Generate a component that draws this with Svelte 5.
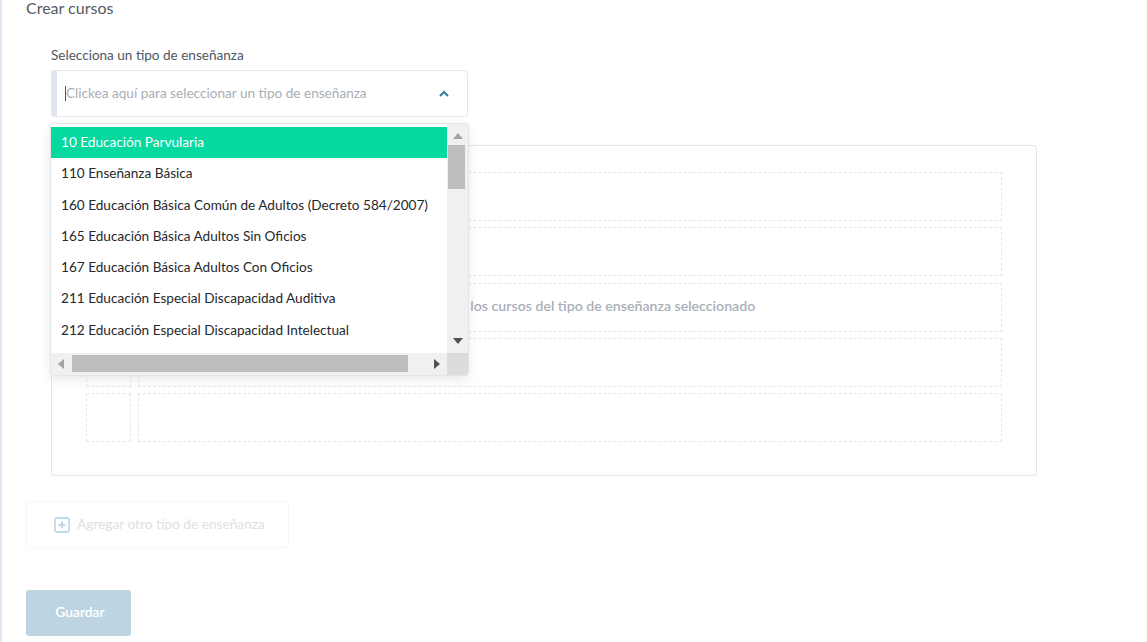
<script>
  const options = [
    '10 Educación Parvularia',
    '110 Enseñanza Básica',
    '160 Educación Básica Común de Adultos (Decreto 584/2007)',
    '165 Educación Básica Adultos Sin Oficios',
    '167 Educación Básica Adultos Con Oficios',
    '211 Educación Especial Discapacidad Auditiva',
    '212 Educación Especial Discapacidad Intelectual'
  ];
  const rows = [1, 2, 3, 4, 5];
</script>

<div class="page">
  <h1>Crear cursos</h1>
  <section class="form">
    <div class="label">Selecciona un tipo de enseñanza</div>
    <div class="field">
      <div class="select">
        <span class="band"></span>
        <span class="caret"></span>
        <span class="placeholder">Clickea aquí para seleccionar un tipo de enseñanza</span>
        <svg class="chev" width="12" height="8" viewBox="0 0 12 8"><path d="M2 6 L6 2 L10 6" fill="none" stroke="#2f7ea6" stroke-width="2"/></svg>
      </div>
      <div class="menu">
        <div class="list">
          {#each options as o, i}
            <div class="opt" class:active={i === 0}>{o}</div>
          {/each}
        </div>
        <div class="vbar">
          <svg class="arrow-up" width="10" height="6" viewBox="0 0 10 6"><path d="M0 6 L5 0 L10 6Z" fill="#a3a3a3"/></svg>
          <div class="vthumb"></div>
          <svg class="arrow-down" width="10" height="6" viewBox="0 0 10 6"><path d="M0 0 L5 6 L10 0Z" fill="#505050"/></svg>
        </div>
        <div class="hbar">
          <svg width="6" height="10" viewBox="0 0 6 10"><path d="M6 0 L0 5 L6 10Z" fill="#a3a3a3"/></svg>
          <div class="hthumb"></div>
          <svg width="6" height="10" viewBox="0 0 6 10"><path d="M0 0 L6 5 L0 10Z" fill="#505050"/></svg>
        </div>
        <div class="corner"></div>
      </div>
    </div>
    <div class="panel">
      <div class="grid">
        {#each rows as r}
          <div class="cell"></div>
          <div class="cell"></div>
        {/each}
      </div>
      <div class="hint">Aquí se visualizarán los cursos del tipo de enseñanza seleccionado</div>
    </div>
  </section>
  <button class="add" type="button">
    <svg width="16" height="16" viewBox="0 0 16 16"><rect x="1" y="1" width="14" height="14" rx="2" fill="#fff" stroke="#c3dbe8" stroke-width="1.8"/><path d="M8 4.5 V11.5 M4.5 8 H11.5" stroke="#b4d0e0" stroke-width="1.6"/></svg>
    <span>Agregar otro tipo de enseñanza</span>
  </button>
  <button class="save" type="button">Guardar</button>
</div>

<style>
  :global(body) { margin: 0; background: #fff; }
  .page {
    height: 642px;
    box-sizing: border-box;
    border-left: 2px solid #e3e6f2;
    padding-left: 24px;
    font-family: Lato, sans-serif;
    overflow: hidden;
  }
  h1 {
    margin: 0;
    height: 17px;
    font-size: 16px;
    line-height: 15px;
    font-weight: 400;
    color: #525a63;
  }
  .form { margin: 29px 0 0 25px; width: 986px; }
  .label { font-size: 13.55px; line-height: 18px; height: 18px; color: #4f5761; }
  .field { position: relative; margin-top: 6px; width: 417px; }
  .select {
    height: 47px;
    box-sizing: border-box;
    border: 1px solid #e6e7ef;
    border-radius: 3px;
    display: flex;
    align-items: center;
    overflow: hidden;
  }
  .band { width: 5px; height: 100%; background: #e0e4ee; flex: none; margin-right: 8px; }
  .caret { width: 1px; height: 15px; background: #555; flex: none; }
  .placeholder { flex: 1; font-size: 13.6px; line-height: 16px; padding-bottom: 2px; color: #a9aeb6; }
  .chev { margin-right: 17px; flex: none; }
  .menu {
    position: absolute;
    left: 0;
    top: 54px;
    width: 417px;
    height: 251px;
    box-sizing: border-box;
    padding-top: 3px;
    background: #fff;
    border-radius: 3px;
    box-shadow: 0 0 1px 1px #e4e4e4, 0 4px 12px rgba(0, 0, 0, 0.1);
    display: grid;
    grid-template-columns: 396px 21px;
    grid-template-rows: 226px 22px;
    overflow: hidden;
    z-index: 2;
  }
  .list { overflow: hidden; }
  .opt {
    height: 31.3px;
    line-height: 30.5px;
    padding-left: 10px;
    font-size: 13.6px;
    color: #25282c;
    white-space: nowrap;
  }
  .opt.active { background: #06d9a0; color: #fff; }
  .vbar { background: #f0f0f0; margin-top: -3px; position: relative; display: flex; flex-direction: column; align-items: center; height: 229px; }
  .arrow-up { margin-top: 9px; }
  .vthumb { width: 17px; height: 44px; background: #bebebe; margin-top: 6px; margin-right: 2px; }
  .arrow-down { margin-top: 149px; }
  .hbar { background: #f0f0f0; display: flex; align-items: center; padding: 0 7px; }
  .hthumb { width: 336px; height: 17px; background: #bebebe; margin: 0 26px 2px 8px; }
  .corner { background: #dcdcdc; }
  .panel {
    position: relative;
    margin-top: 28px;
    height: 331px;
    box-sizing: border-box;
    border: 1px solid #e4e4ea;
    border-radius: 3px;
    padding: 26px 34px 0;
  }
  .grid {
    display: grid;
    grid-template-columns: 45px 864px;
    column-gap: 7px;
    row-gap: 6.25px;
  }
  .cell { height: 49px; box-sizing: border-box; border: 1px dashed #e4e4ea; }
  .hint {
    position: absolute;
    left: 12px;
    right: 0;
    top: 151px;
    text-align: center;
    font-size: 14.15px;
    font-weight: 600;
    color: #a9afb8;
  }
  .add {
    display: flex;
    align-items: center;
    gap: 7px;
    margin-top: 25px;
    width: 263px;
    height: 47px;
    padding: 0 0 0 27px;
    box-sizing: border-box;
    background: #fff;
    border: 1px solid #f6f6f8;
    border-radius: 3px;
    font: inherit;
    font-size: 13.7px;
    color: #dfe0e4;
  }
  .add span { padding-bottom: 3px; }
  .save {
    display: block;
    margin-top: 42px;
    width: 105px;
    height: 46px;
    padding: 0 0 3px 3px;
    background: #bdd5e2;
    border: 0;
    border-radius: 3px;
    color: #fff;
    font: inherit;
    font-size: 13.8px;
    font-weight: 600;
  }
</style>
